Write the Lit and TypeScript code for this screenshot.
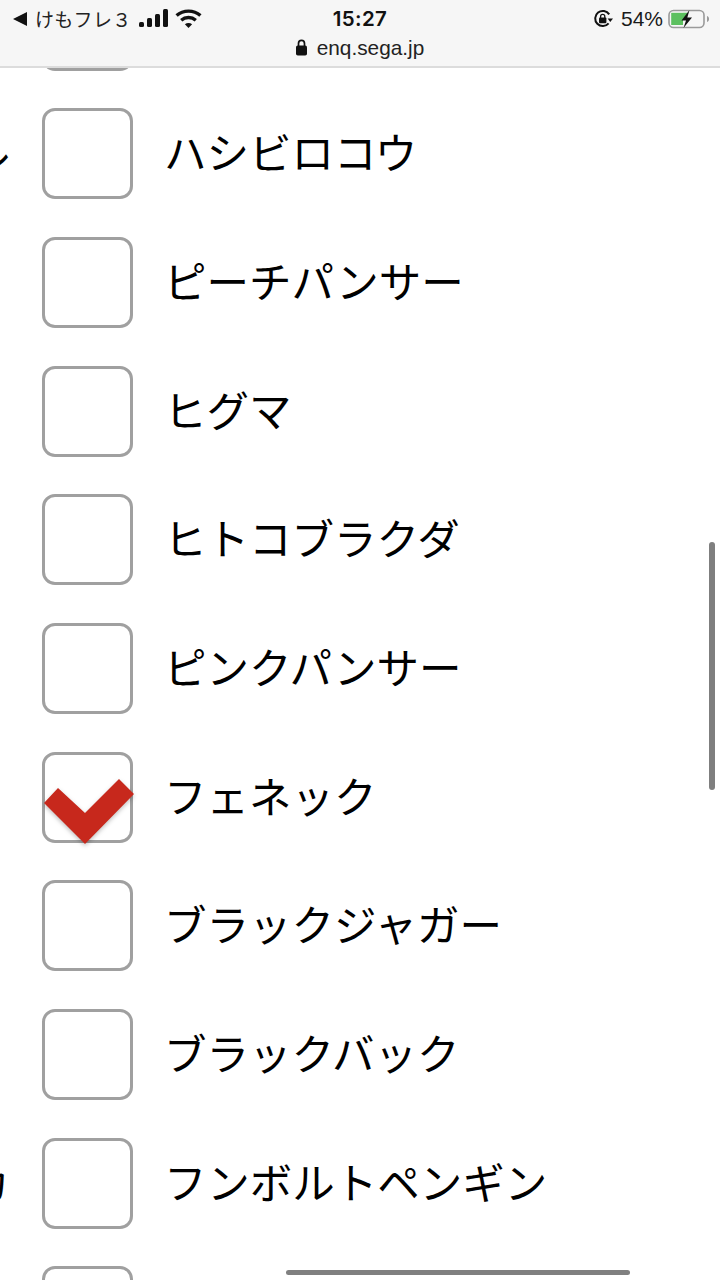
import { LitElement, html, css } from "lit";
import { customElement } from "lit/decorators.js";

const ROWS: { label: string; checked?: boolean; clip?: string }[] = [
  { label: "" },
  { label: "ハシビロコウ", clip: "ル" },
  { label: "ピーチパンサー" },
  { label: "ヒグマ" },
  { label: "ヒトコブラクダ" },
  { label: "ピンクパンサー" },
  { label: "フェネック", checked: true },
  { label: "ブラックジャガー" },
  { label: "ブラックバック" },
  { label: "フンボルトペンギン", clip: "カ" },
  { label: "" },
];

@customElement("app-root")
export class AppRoot extends LitElement {
  static styles = css`
    :host {
      display: block;
      position: relative;
      width: 720px;
      height: 1280px;
      overflow: hidden;
      background: #fff;
      font-family: "Noto Sans CJK JP", "Liberation Sans", sans-serif;
      color: #000;
    }
    .bar {
      position: absolute;
      z-index: 2;
      top: 0;
      left: 0;
      right: 0;
      height: 68px;
      box-sizing: border-box;
      background: #f6f6f6;
      border-bottom: 2px solid #dcdcdc;
      display: grid;
      grid-template-columns: 1fr auto 1fr;
      padding: 4px 13px 0 13px;
      font-family: "Inter", "Liberation Sans", "Noto Sans CJK JP", sans-serif;
      color: #111;
    }
    .left, .right {
      display: flex;
      align-items: center;
      height: 29px;
    }
    .right { justify-content: flex-end; margin-right: -3px; }
    .carrier {
      font-size: 19px;
      margin-left: 8px;
      letter-spacing: 0.3px;
      font-family: "Noto Sans CJK JP", sans-serif;
      font-weight: 400;
      color: #222;
    }
    .signal { margin-left: 7px; }
    .wifi { margin-left: 6px; }
    .mid {
      display: flex;
      flex-direction: column;
      align-items: center;
    }
    .time {
      font-size: 20.5px;
      font-weight: 600;
      line-height: 29px;
      letter-spacing: 0.4px;
    }
    .url {
      display: flex;
      align-items: center;
      gap: 10px;
      font-size: 20.8px;
      line-height: 29px;
      color: #222;
      font-family: "Liberation Sans", sans-serif;
    }
    .pct {
      font-size: 21px;
      margin: 0 5px 0 8px;
      color: #1a1a1a;
      font-family: "Liberation Sans", sans-serif;
    }
    .list {
      display: flex;
      flex-direction: column;
      gap: 37.67px;
      margin-top: -20.2px;
    }
    .row {
      display: flex;
      align-items: center;
      height: 91px;
      padding-left: 42px;
      position: relative;
    }
    .box {
      flex: none;
      position: relative;
      width: 91px;
      height: 91px;
      box-sizing: border-box;
      border: 3px solid #a0a0a0;
      border-radius: 13px;
      background: #fff;
    }
    .label {
      margin-left: 31px;
      font-size: 42.5px;
      line-height: 60px;
      margin-top: -5px;
      font-weight: 400;
      white-space: nowrap;
    }
    .clip {
      position: absolute;
      right: 100%;
      font-size: 42.5px;
      line-height: 60px;
      margin-top: -5px;
      margin-right: -10px;
      font-weight: 400;
    }
    .check {
      position: absolute;
      left: -1px;
      top: 24px;
      width: 94px;
      height: 70px;
      overflow: visible;
    }
    .tick {
      fill: #c7281c;
      filter: drop-shadow(0 2px 2px rgba(0, 0, 0, 0.25));
    }
    .scroll {
      position: absolute;
      left: 709px;
      top: 542px;
      width: 6px;
      height: 248px;
      border-radius: 3px;
      background: #7f7f7f;
    }
    .home {
      position: absolute;
      left: 286px;
      top: 1270px;
      width: 344px;
      height: 5px;
      border-radius: 3px;
      background: #808080;
    }
  `;

  private statusBar() {
    return html`<div class="bar">
      <div class="left">
        <svg width="14" height="14" viewBox="0 0 14 14"><path d="M0 7 14 0V14Z" fill="#111"/></svg>
        <span class="carrier">けもフレ３</span>
        <svg class="signal" width="30" height="20" viewBox="0 0 30 20" fill="#111">
          <rect x="0" y="13" width="5" height="5" rx="1.500"/>
          <rect x="8" y="9" width="5" height="9" rx="1.500"/>
          <rect x="16" y="5" width="5" height="13" rx="1.500"/>
          <rect x="24" y="0" width="5" height="18" rx="1.500"/>
        </svg>
        <svg class="wifi" width="27" height="20" viewBox="0 0 27 20" fill="none" stroke="#111" stroke-width="3.400">
          <path d="M1.600 6.600C8.300.6 18.700.6 25.400 6.600"/>
          <path d="M6.200 11.200C10.400 7.600 16.600 7.600 20.800 11.200"/>
          <path d="M13.500 19 9.900 15.200C12 13.600 15 13.600 17.100 15.200Z" fill="#111" stroke="none"/>
        </svg>
      </div>
      <div class="mid">
        <div class="time">15:27</div>
        <div class="url">
          <svg width="11" height="17" viewBox="0 0 11 17"><path d="M2.500 7V4.400a3 3 0 0 1 6 0V7" fill="none" stroke="#111" stroke-width="1.700"/><rect x="0" y="6.500" width="11" height="10" rx="1.800" fill="#111"/></svg>
          <span>enq.sega.jp</span>
        </div>
      </div>
      <div class="right">
        <svg width="20" height="20" viewBox="0 0 20 20">
          <path d="M15.600 14.400A7.600 7.600 0 1 1 16.200 5.400" fill="none" stroke="#111" stroke-width="2"/>
          <path d="M20 9.600 14.600 9.600 17.300 13Z" fill="#111"/>
          <rect x="6" y="8.600" width="7.400" height="5.600" rx="1" fill="#111"/>
          <path d="M7.600 9V7.400a2.100 2.100 0 0 1 4.200 0V9" fill="none" stroke="#111" stroke-width="1.300"/>
        </svg>
        <span class="pct">54%</span>
        <svg width="42" height="20" viewBox="0 0 42 20">
          <rect x="1" y="1.500" width="35" height="17" rx="4.500" fill="none" stroke="#9a9a9a" stroke-width="1.600"/>
          <path d="M3.200 3.800H15V16H3.200Z" fill="#5cc05f"/>
          <path d="M15 3.800H20L15 11Z" fill="#5cc05f"/>
          <path d="M39 7c1.600.5 2 1.600 2 3s-.4 2.500-2 3Z" fill="#9a9a9a"/>
          <path d="M21.500 1 13.500 11.500H18L15.500 19 24 8.500H19.300Z" fill="#111"/>
        </svg>
      </div>
    </div>`;
  }

  render() {
    return html`
      ${this.statusBar()}
      <div class="list">
        ${ROWS.map(
          (r) => html`<div class="row">
            ${r.clip ? html`<span class="clip">${r.clip}</span>` : ""}
            <div class="box">${r.checked
              ? html`<svg class="check" viewBox="0 0 94 70"><path class="tick" d="M0 24 14 9 41 34 75 0 90 15 41 65Z"/></svg>`
              : ""}</div>
            <span class="label">${r.label}</span>
          </div>`
        )}
      </div>
      <div class="scroll"></div>
      <div class="home"></div>
    `;
  }
}
